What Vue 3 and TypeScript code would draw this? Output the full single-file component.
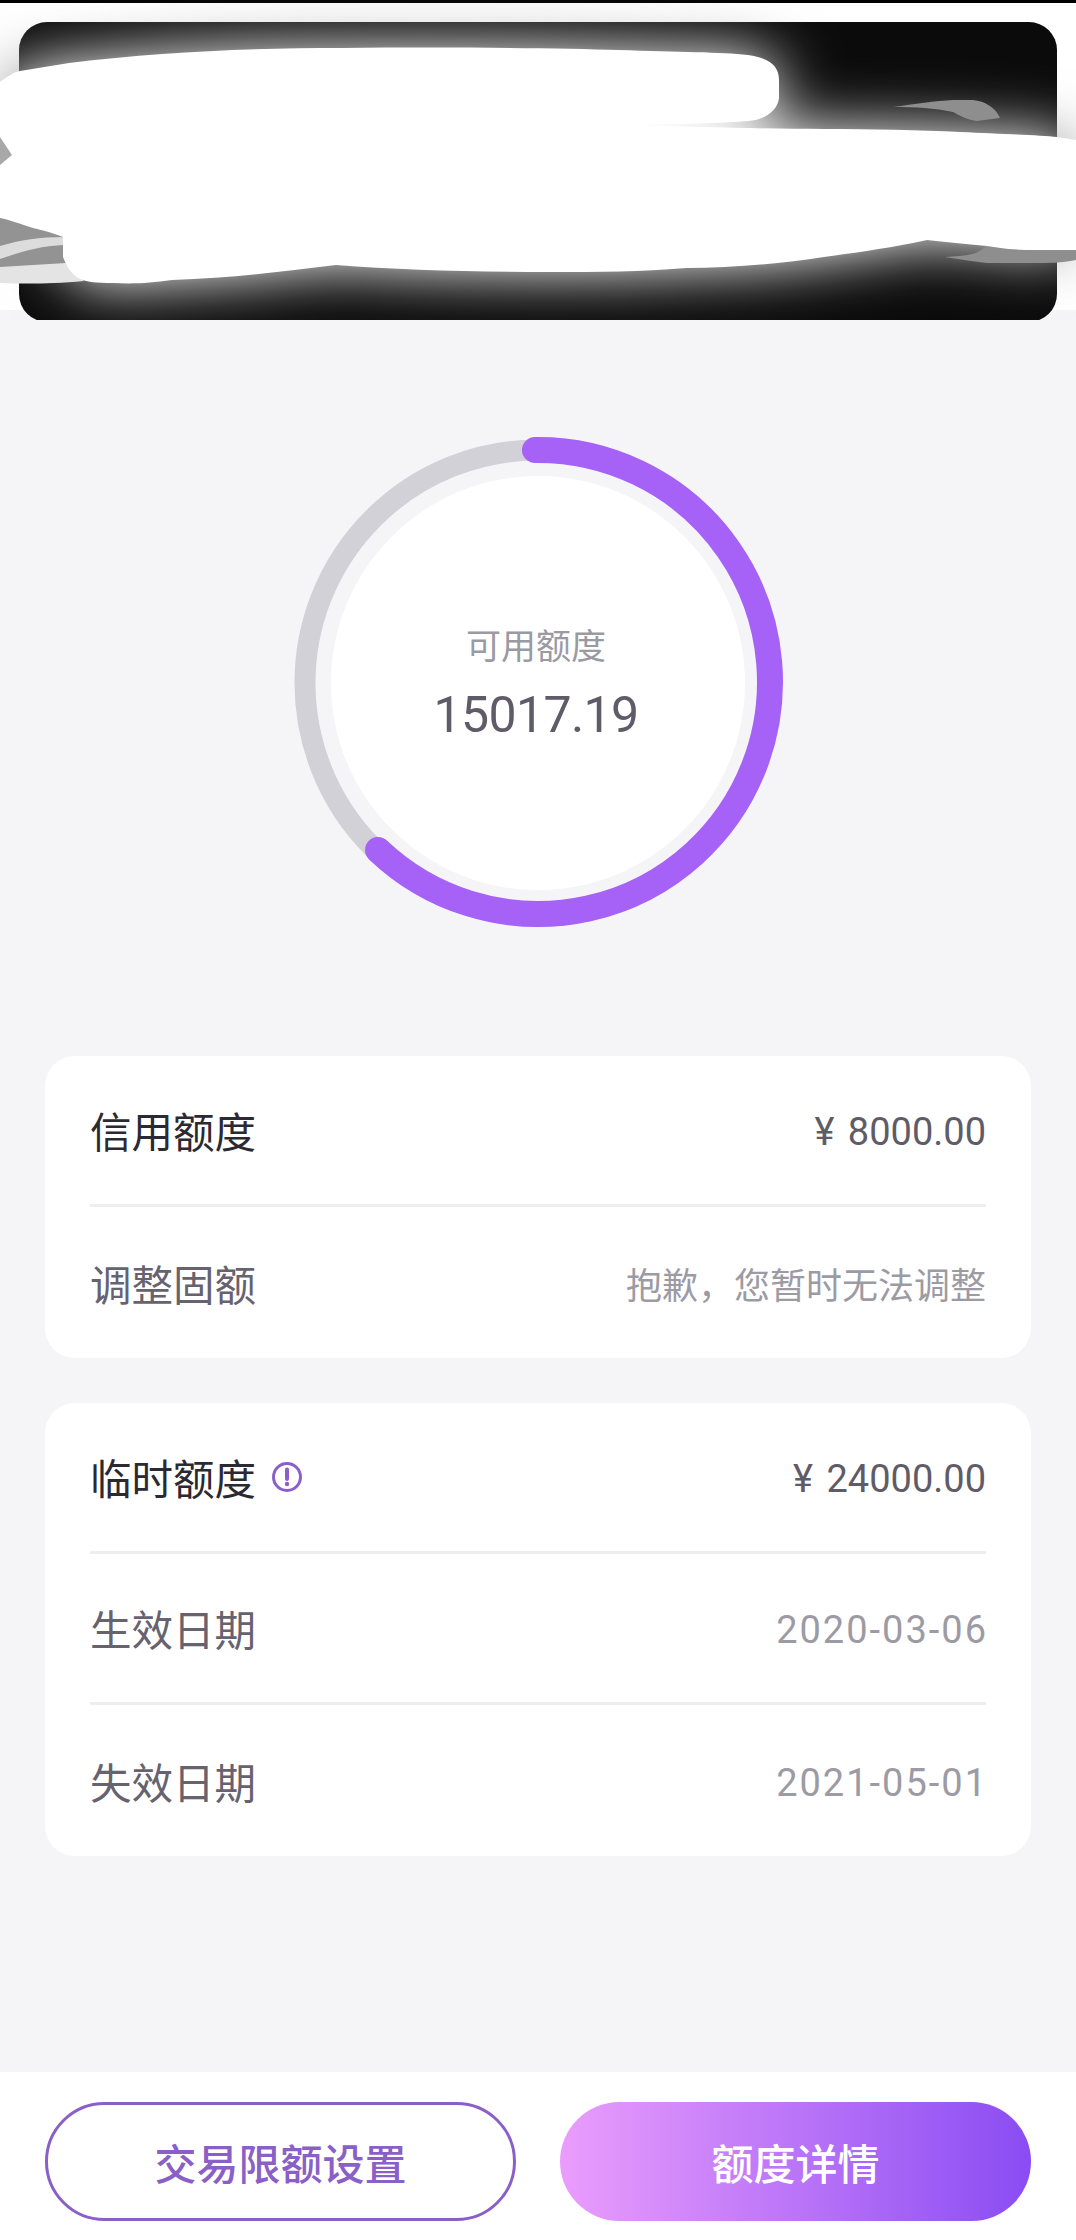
<script setup lang="ts">
interface Row {
  label: string
  value: string
  primary?: boolean
  hint?: boolean
  strong?: boolean
  date?: boolean
}

const creditRows: Row[] = [
  { label: '信用额度', value: '¥ 8000.00', primary: true, strong: true },
  { label: '调整固额', value: '抱歉，您暂时无法调整' },
]

const tempRows: Row[] = [
  { label: '临时额度', value: '¥ 24000.00', primary: true, hint: true, strong: true },
  { label: '生效日期', value: '2020-03-06', date: true },
  { label: '失效日期', value: '2021-05-01', date: true },
]

const groups = [creditRows, tempRows]

// redacted area painted over the bank card in the screenshot
const blob =
  'M0 82 C8 76 14 72 20 71 L69 63 C160 52 250 48 343 48 C450 47 560 48 618 50 C680 52 720 52 748 55 C770 58 779 66 779 80 L779 98 C778 110 765 120 748 121 C710 124 670 124 631 125 C700 127 770 129 824 129 C870 129 920 130 960 132 C1000 134 1040 135 1057 137 L1076 140 L1076 250 L1037 250 C1010 250 1000 248 987 246 C965 244 945 242 927 240 C890 248 860 252 824 257 C780 264 730 268 686 268 C640 272 600 272 549 272 C470 272 400 270 336 265 C280 272 230 278 172 280 C150 283 135 284 113 283 C95 283 88 282 83 280 C74 277 68 270 63 257 L63 237 C50 232 45 231 33 228 C20 224 10 220 0 218 L0 165 L12 155 L0 137 Z'
</script>

<template>
  <div class="page">
    <div class="top-line"></div>
    <header class="header">
      <svg class="bank-card" viewBox="0 0 1076 320" width="1076" height="320" aria-hidden="true">
        <defs>
          <clipPath id="cardClip">
            <rect x="19" y="22" width="1038" height="300" rx="28" />
          </clipPath>
          <filter id="glow" x="-20%" y="-40%" width="140%" height="180%">
            <feGaussianBlur stdDeviation="30" />
          </filter>
        </defs>
        <path :d="blob" fill="#9a9a9a" filter="url(#glow)" />
        <rect x="19" y="22" width="1038" height="300" rx="28" fill="#0b0b0b" />
        <g clip-path="url(#cardClip)">
          <path :d="blob" fill="#fff" filter="url(#glow)" />
        </g>
        <path d="M893 107 C915 104 935 101 953 100 L973 100 C985 101 996 108 1000 118 L977 121 C968 120 960 116 953 112 C935 108 915 107 893 107 Z" fill="#8e8e8e" />
        <path d="M985 240 L1076 240 L1076 260 C1060 263 1050 263 1037 263 L987 263 C970 261 958 259 945 257 C960 256 977 256 985 247 Z" fill="#8e8e8e" />
        <path d="M0 130 L14 155 L0 170 Z" fill="#a8a8a8" />
        <path d="M0 214 L66 234 L66 268 L0 268 Z" fill="#939393" />
        <path d="M0 246 C20 240 40 237 64 237 L64 245 C40 246 20 252 0 259 Z" fill="#dcdcdc" />
        <path d="M0 267 L66 263 L84 281 C50 284 25 284 0 283 Z" fill="#e4e4e4" />
        <path :d="blob" fill="#fff" />
      </svg>
    </header>

    <section class="ring-wrap">
      <svg class="ring" viewBox="0 0 500 500" width="500" height="500" aria-hidden="true">
        <circle cx="250" cy="254" r="233" fill="none" stroke="#d2d1d7" stroke-width="21" />
        <circle cx="250" cy="254" r="207" fill="#fff" />
        <path
          d="M247 21 A232 232 0 1 1 90 421"
          fill="none"
          stroke="#a661f7"
          stroke-width="26"
          stroke-linecap="round"
        />
      </svg>
      <div class="ring-text">
        <div class="ring-label">可用额度</div>
        <div class="ring-value">15017.19</div>
      </div>
    </section>

    <main class="cards">
      <div v-for="(rows, i) in groups" :key="i" class="card">
        <div v-for="row in rows" :key="row.label" class="row">
          <div class="label" :class="{ primary: row.primary }">
            {{ row.label }}
            <svg v-if="row.hint" class="hint" viewBox="0 0 32 32" width="32" height="32" aria-hidden="true">
              <circle cx="16" cy="16" r="13.5" fill="none" stroke="#8b5fcb" stroke-width="3" />
              <path d="M16 8.5 V18" stroke="#8b5fcb" stroke-width="4" stroke-linecap="round" />
              <circle cx="16" cy="23" r="2.2" fill="#8b5fcb" />
            </svg>
          </div>
          <div class="value" :class="{ strong: row.strong, date: row.date }">{{ row.value }}</div>
        </div>
      </div>
    </main>

    <footer class="footer">
      <button class="btn btn-outline">交易限额设置</button>
      <button class="btn btn-fill">额度详情</button>
    </footer>
  </div>
</template>

<style>
html,
body {
  margin: 0;
  background: #f5f5f7;
}
</style>

<style scoped>
.page {
  width: 1076px;
  height: 2240px;
  display: flex;
  flex-direction: column;
  overflow: hidden;
  background: #f5f5f7;
  font-family: Roboto, "Noto Sans CJK SC", sans-serif;
}

.top-line {
  height: 3px;
  background: #000;
}

.header {
  position: relative;
  height: 317px;
  background: linear-gradient(#fff 0, #fff 307px, #f5f5f7 307px);
}

.bank-card {
  position: absolute;
  left: 0;
  top: -3px;
}

.ring-wrap {
  display: grid;
  justify-items: center;
  align-items: center;
  padding-top: 109px;
}

.ring {
  grid-area: 1 / 1;
  display: block;
}

.ring-text {
  grid-area: 1 / 1;
  display: flex;
  flex-direction: column;
  align-items: center;
  padding-top: 12px;
  margin-right: 4px;
}

.ring-label {
  font-size: 35px;
  line-height: 46px;
  color: #9b9aa2;
}

.ring-value {
  margin-top: 14px;
  font-size: 50px;
  letter-spacing: -0.6px;
  line-height: 60px;
  color: #5f5b68;
}

.cards {
  display: flex;
  flex-direction: column;
  gap: 45px;
  padding: 127px 45px 0;
  flex: 1;
}

.card {
  background: #fff;
  border-radius: 30px;
  padding: 0 45px;
}

.row {
  height: 151px;
  display: flex;
  align-items: center;
  justify-content: space-between;
  box-sizing: border-box;
  border-bottom: 3px solid #eeeef0;
}

.row:last-child {
  border-bottom: none;
}

.label {
  display: flex;
  align-items: center;
  gap: 15px;
  font-size: 41.5px;
  color: #66626e;
}

.label.primary {
  color: #2b2932;
}

.hint {
  display: block;
}

.value {
  font-size: 36px;
  color: #9c9ba4;
}

.value.strong {
  font-size: 38px;
  word-spacing: 4px;
  padding-top: 4px;
  color: #5f5c68;
}

.value.date {
  font-size: 38px;
  letter-spacing: 2px;
  margin-right: -2px;
  padding-top: 4px;
}

.footer {
  height: 168px;
  background: #fff;
  display: flex;
  justify-content: space-between;
  align-items: flex-start;
  padding: 30px 45px 0;
  box-sizing: border-box;
}

.btn {
  width: 471px;
  height: 119px;
  border-radius: 60px;
  font-family: inherit;
  font-size: 42px;
  font-weight: 500;
  padding: 0;
  box-sizing: border-box;
}

.btn-outline {
  background: #fff;
  border: 3px solid #8a5fc7;
  color: #8a5fc7;
}

.btn-fill {
  border: none;
  color: #fff;
  background: linear-gradient(90deg, #ea9dfc 0%, #8a4cf3 100%);
}
</style>
